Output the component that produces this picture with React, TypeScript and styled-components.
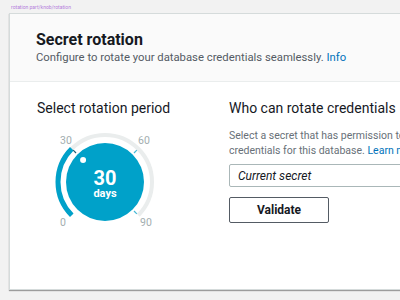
import styled, { createGlobalStyle } from 'styled-components'

const GlobalStyle = createGlobalStyle`
  html, body {
    margin: 0;
    width: 400px;
    height: 300px;
    overflow: hidden;
    background: #f2f2f2;
  }
  body {
    font-family: Roboto, "Noto Sans", sans-serif;
    color: #16191f;
  }
`

const Page = styled.div`
  padding: 4px 0 0 9px;
`

const FrameLabel = styled.div`
  margin-left: 2px;
  height: 9px;
  font-size: 5px;
  line-height: 7px;
  color: #b57edc;
`

const Card = styled.section`
  box-sizing: border-box;
  width: 520px;
  height: 277px;
  background: #fff;
  border: 1px solid #d5dbdb;
  box-shadow: 0 1px 1px rgba(0, 0, 0, 0.35);
`

const Header = styled.header`
  padding: 16px 26px 15px;
  background: #fafafa;
  border-bottom: 1px solid #eaeded;
`

const Title = styled.h1`
  margin: 0;
  font-size: 16px;
  line-height: 20px;
  font-weight: 700;
`

const Subtitle = styled.p`
  margin: 0;
  font-size: 11.3px;
  line-height: 16px;
  color: #545b64;
`

const Link = styled.a`
  color: #0073bb;
  text-decoration: none;
`

const Body = styled.div`
  display: flex;
  padding: 16px 0 0 27px;
`

const Column = styled.div<{ width?: number }>`
  display: flex;
  flex-direction: column;
  align-items: flex-start;
  ${props => props.width ? `width: ${props.width}px; flex: none;` : 'flex: 1;'}
`

const Heading = styled.h2`
  margin: 0;
  font-size: 14px;
  line-height: 20px;
  font-weight: 400;
`

const Dial = styled.svg`
  display: block;
  margin: 14px 0 0 13px;
`

const Hint = styled.p`
  margin: 10px 0 0;
  max-width: 240px;
  font-size: 10.5px;
  line-height: 15px;
  color: #687078;
`

const Select = styled.div`
  box-sizing: border-box;
  align-self: stretch;
  height: 23px;
  margin-top: 6px;
  padding: 0 8px;
  display: flex;
  align-items: center;
  border: 1px solid #aab7b8;
  border-radius: 2px;
  font-size: 12px;
  font-style: italic;
`

const Button = styled.button`
  box-sizing: border-box;
  width: 100px;
  height: 26px;
  margin-top: 10px;
  background: #fff;
  border: 1px solid #545b64;
  border-radius: 2px;
  font-family: inherit;
  font-size: 12px;
  font-weight: 700;
  color: #16191f;
`

const CX = 55
const CY = 50
const R = 47

const point = (deg: number, r: number) => {
  const a = (deg * Math.PI) / 180
  return [CX + r * Math.sin(a), CY - r * Math.cos(a)]
}

const arc = (from: number, to: number) => {
  const [x1, y1] = point(from, R)
  const [x2, y2] = point(to, R)
  const large = to - from > 180 ? 1 : 0
  return `M ${x1} ${y1} A ${R} ${R} 0 ${large} 1 ${x2} ${y2}`
}

const Tick = ({ deg, color }: { deg: number; color: string }) => {
  const [x1, y1] = point(deg, 41)
  const [x2, y2] = point(deg, 45)
  return <line x1={x1} y1={y1} x2={x2} y2={y2} stroke={color} strokeWidth={1.2} />
}

const Knob = () => {
  const [hx, hy] = point(-45, 31)
  return (
    <Dial width={110} height={100} viewBox="0 0 110 100">
      <path d={arc(-135, 135)} fill="none" stroke="#eaeded" strokeWidth={4} />
      <path d={arc(-135, -45)} fill="none" stroke="#00a1c9" strokeWidth={5} />
      <circle cx={CX} cy={CY} r={39} fill="#00a1c9" />
      <Tick deg={-45} color="#1b5f75" />
      <Tick deg={45} color="#44b9d6" />
      <Tick deg={135} color="#44b9d6" />
      <circle cx={hx} cy={hy} r={3} fill="#fff" />
      <g fontFamily="Roboto, sans-serif" fontSize="10.5" fill="#a3aeb0" textAnchor="middle">
        <text x={16} y={12}>30</text>
        <text x={94} y={12}>60</text>
        <text x={13} y={94}>0</text>
        <text x={96} y={94}>90</text>
      </g>
      <g fontFamily="Roboto, sans-serif" fontWeight="700" fill="#fff" textAnchor="middle">
        <text x={CX} y={53} fontSize="20">30</text>
        <text x={CX} y={65} fontSize="11">days</text>
      </g>
    </Dial>
  )
}

export default function App() {
  return (
    <Page>
      <GlobalStyle />
      <FrameLabel>rotation part/knob/rotation</FrameLabel>
      <Card>
        <Header>
          <Title>Secret rotation</Title>
          <Subtitle>
            Configure to rotate your database credentials seamlessly. <Link>Info</Link>
          </Subtitle>
        </Header>
        <Body>
          <Column width={192}>
            <Heading>Select rotation period</Heading>
            <Knob />
          </Column>
          <Column>
            <Heading>Who can rotate credentials</Heading>
            <Hint>
              Select a secret that has permission to rotate credentials for this database.{' '}
              <Link>Learn more</Link>
            </Hint>
            <Select>Current secret</Select>
            <Button>Validate</Button>
          </Column>
        </Body>
      </Card>
    </Page>
  )
}
